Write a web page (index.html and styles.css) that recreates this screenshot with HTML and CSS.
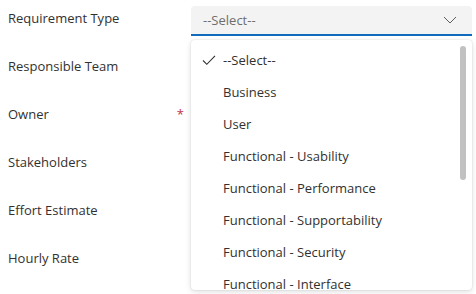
FILE: index.html
```html
<!DOCTYPE html>
<html>
<head>
<meta charset="utf-8">
<link rel="stylesheet" href="styles.css">
</head>
<body>
<div class="form">
  <div class="row">
    <div class="label">Requirement Type</div>
    <div class="field">
      <span class="placeholder">--Select--</span>
      <svg class="chev" width="14" height="8" viewBox="0 0 14 8"><path d="M1 1 L7 7 L13 1" fill="none" stroke="#605e5c" stroke-width="1"/></svg>
    </div>
  </div>
  <div class="row"><div class="label">Responsible Team</div></div>
  <div class="row"><div class="label">Owner<span class="req">*</span></div></div>
  <div class="row"><div class="label">Stakeholders</div></div>
  <div class="row"><div class="label">Effort Estimate</div></div>
  <div class="row"><div class="label">Hourly Rate</div></div>

  <div class="menu">
    <div class="item selected"><svg class="check" width="14" height="12" viewBox="0 0 14 12"><path d="M1 6.5 L4.8 10.3 L13 1.8" fill="none" stroke="#323130" stroke-width="1.1"/></svg>--Select--</div>
    <div class="item">Business</div>
    <div class="item">User</div>
    <div class="item">Functional - Usability</div>
    <div class="item">Functional - Performance</div>
    <div class="item">Functional - Supportability</div>
    <div class="item">Functional - Security</div>
    <div class="item">Functional - Interface</div>
    <div class="scroll"></div>
  </div>
</div>
</body>
</html>
```
FILE: styles.css
```css
html, body {
  margin: 0;
  padding: 0;
  background: #ffffff;
}
body {
  font-family: "Segoe UI", "Open Sans", "Noto Sans", sans-serif;
  font-size: 13px;
  color: #323130;
  width: 476px;
  height: 294px;
  overflow: hidden;
}
.form {
  position: relative;
  padding: 6px 4px 0 8px;
}
.row {
  display: grid;
  grid-template-columns: 183px 281px;
  height: 48px;
}
.label {
  display: flex;
  justify-content: space-between;
  align-items: flex-start;
  padding-top: 2px;
  padding-right: 7px;
  line-height: 20px;
  color: #323130;
}
.req {
  color: #c4314b;
  font-size: 13px;
}
.field {
  height: 28px;
  background: #f3f3f3;
  border-bottom: 2px solid #0f6cbd;
  border-radius: 4px 4px 0 0;
  display: flex;
  align-items: center;
  justify-content: space-between;
  padding: 0 15px 0 12px;
  box-sizing: content-box;
}
.placeholder {
  color: #6e6e6e;
  line-height: 20px;
}
.chev {
  display: block;
}
.menu {
  position: absolute;
  left: 191px;
  top: 40px;
  width: 281px;
  height: 250px;
  background: #ffffff;
  border-radius: 4px;
  box-shadow: 0 0 2px rgba(0,0,0,0.14), 0 2px 6px rgba(0,0,0,0.12);
  padding-top: 4px;
  box-sizing: border-box;
  overflow: hidden;
}
.item {
  height: 32px;
  display: flex;
  align-items: center;
  padding-left: 32px;
  line-height: 20px;
  color: #323130;
  position: relative;
}
.check {
  position: absolute;
  left: 11px;
  top: 10px;
}
.scroll {
  position: absolute;
  right: 6px;
  top: 6px;
  width: 6px;
  height: 134px;
  border-radius: 3px;
  background: #c1c1c1;
}
```
